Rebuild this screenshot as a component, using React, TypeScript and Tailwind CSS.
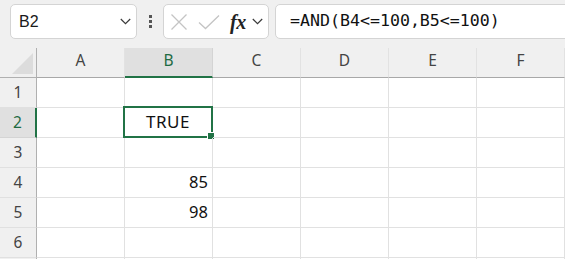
import React from "react";

const cols = ["A", "B", "C", "D", "E", "F"];
const rows = [1, 2, 3, 4, 5, 6, 7];

function Chevron({ className }: { className?: string }) {
  return (
    <svg className={className} width="11" height="7" viewBox="0 0 11 7" fill="none">
      <path d="M0.8 1 L5.5 5.7 L10.2 1" stroke="#3a3a3a" strokeWidth="1.2" />
    </svg>
  );
}

export default function App() {
  const cellValue = (r: number, c: string) => {
    if (c === "B" && r === 4) return "85";
    if (c === "B" && r === 5) return "98";
    return "";
  };
  return (
    <div className="w-[565px] h-[259px] bg-[#f0f0f0] overflow-hidden font-['Noto_Sans',sans-serif]">
      {/* toolbar */}
      <div className="h-[48px] flex items-start pt-[4px] pl-[10px]">
        <div className="shrink-0 w-[127px] h-[35px] bg-white border border-[#d4d4d4] rounded-[5px] flex items-center justify-between pl-[8px] pr-[5px]">
          <span className="text-[16px] text-[#1a1a1a] font-['Liberation_Sans',sans-serif] leading-none">B2</span>
          <Chevron />
        </div>
        <div className="shrink-0 w-[26px] h-[35px] flex flex-col items-center justify-center gap-[2px]">
          <div className="w-[3px] h-[3px] bg-[#555]" />
          <div className="w-[3px] h-[3px] bg-[#555]" />
          <div className="w-[3px] h-[3px] bg-[#555]" />
        </div>
        <div className="shrink-0 w-[106px] h-[35px] bg-white border border-[#d4d4d4] rounded-[5px] flex items-center pl-[6px]">
          <svg width="18" height="18" viewBox="0 0 18 18" fill="none">
            <path d="M1.5 1.5 L16.5 16.5 M16.5 1.5 L1.5 16.5" stroke="#c4c4c4" strokeWidth="1.3" />
          </svg>
          <svg className="ml-[10px]" width="22" height="16" viewBox="0 0 22 16" fill="none">
            <path d="M1 8.5 L7.5 14.5 L21 1.5" stroke="#c4c4c4" strokeWidth="1.3" />
          </svg>
          <span className="ml-[10px] text-[20px] leading-none italic font-bold font-['Liberation_Serif',serif] text-[#222] tracking-[-0.5px]">fx</span>
          <Chevron className="ml-[6px]" />
        </div>
        <div className="shrink-0 ml-[6px] h-[35px] w-[310px] bg-white border border-[#d4d4d4] rounded-[5px] flex items-center pl-[14px]">
          <span className="text-[16.6px] leading-none text-[#111] font-['DejaVu_Sans_Mono',monospace]">=AND(B4&lt;=100,B5&lt;=100)</span>
        </div>
      </div>

      {/* grid */}
      <div className="bg-white">
        {/* header row */}
        <div className="flex h-[30px] bg-[#f0f0f0]">
          <div className="shrink-0 w-[37px] h-[30px] border-r border-b border-[#b0b0b0] relative">
            <svg className="absolute left-0 top-0" width="36" height="29" viewBox="0 0 36 29">
              <polygon points="33,5 33,26 12,26" fill="#dcdcdc" />
            </svg>
          </div>
          {cols.map((c) => {
            const sel = c === "B";
            return (
              <div
                key={c}
                className={
                  sel
                    ? "shrink-0 w-[88px] h-[30px] bg-[#e0e0e0] border-b-[2px] border-b-[#217346] border-r border-r-[#d4d4d4] flex items-center justify-center pb-[2px] text-[15.5px] text-[#1e6b43]"
                    : "shrink-0 w-[88px] h-[30px] border-b border-b-[#a8a8a8] border-r border-r-[#e2e2e2] flex items-center justify-center pb-[3px] text-[15.5px] text-[#444]"
                }
              >
                {c}
              </div>
            );
          })}
        </div>
        {rows.map((r) => (
          <div key={r} className="flex h-[30px]">
            <div
              className={
                r === 2
                  ? "shrink-0 w-[37px] h-[30px] bg-[#e0e0e0] border-r-[2px] border-r-[#217346] border-b border-b-[#d4d4d4] flex items-center justify-center text-[15.5px] text-[#1e6b43]"
                  : "shrink-0 w-[37px] h-[30px] bg-[#f0f0f0] border-r border-r-[#b0b0b0] border-b border-b-[#e0e0e0] flex items-center justify-center text-[15.5px] text-[#444]"
              }
            >
              {r <= 6 ? r : ""}
            </div>
            {cols.map((c) => (
              <div
                key={c}
                className="shrink-0 w-[88px] h-[30px] border-r border-b border-[#e1e1e1] relative flex items-center justify-end pr-[4px] text-[16.5px] text-[#111]"
              >
                {cellValue(r, c)}
                {r === 2 && c === "B" && (
                  <div className="absolute left-[-2px] top-[-2px] right-[-1px] bottom-[-1px] border-[2px] border-[#217346] flex items-center justify-center">
                    <span className="text-[17px] text-[#111] tracking-[0.5px]">TRUE</span>
                    <div className="absolute right-[-4px] bottom-[-4px] w-[6px] h-[6px] bg-[#217346] border border-white box-content" />
                  </div>
                )}
              </div>
            ))}
          </div>
        ))}
      </div>
    </div>
  );
}
